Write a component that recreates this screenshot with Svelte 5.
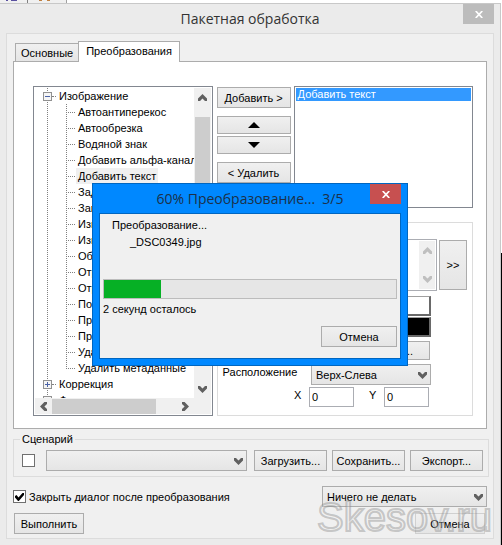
<script>
    let closeAfter = $state(true);
    let useScenario = $state(false);
    let selected = $state('Добавить текст');
    let posX = $state('0');
    let posY = $state('0');
    let progress = $state(19.5);

    const filters = [
        'Автоантиперекос',
        'Автообрезка',
        'Водяной знак',
        'Добавить альфа-канал',
        'Добавить текст',
        'Задать DPI',
        'Заменить',
        'Изменить',
        'Изменить',
        'Обрезка',
        'Отразить',
        'Отразить',
        'Поворот',
        'Преобразовать',
        'Профиль',
        'Удалить',
        'Удалить метаданные'
    ];
</script>

{#snippet chevron(dir)}
    <svg class="chevron {dir}" viewBox="0 0 9 7" width="9" height="7" aria-hidden="true">
        <path d="M0 0h2l2.5 2.6L7 0h2v2.6L4.5 7 0 2.6z" />
    </svg>
{/snippet}

{#snippet cross()}
    <svg viewBox="0 0 8 7" width="8" height="7" aria-hidden="true">
        <path d="M.7 0l6.600 7M7.300 0L.7 7" fill="none" stroke="#fff" stroke-width="1.700" />
    </svg>
{/snippet}

<div class="desktop">
    <div class="behind">
        <span class="blue"><i></i><i></i></span>
        <span class="orange"><i></i><i></i></span>
    </div>

    <main class="window">
        <header class="caption">
            <h1>Пакетная обработка</h1>
            <button class="close" type="button" aria-label="Закрыть">{@render cross()}</button>
        </header>

        <div class="client">
            <div class="tabs" role="tablist">
                <button type="button" role="tab" aria-selected="false">Основные</button>
                <button type="button" role="tab" aria-selected="true" class="active">Преобразования</button>
            </div>

            <section class="page">
                <div class="tree">
                    <div class="view">
                        <ul>
                            <li class="parent"><i class="box"></i><span>Изображение</span></li>
                            {#each filters as name, i}
                                <li class="child" class:last={i == filters.length - 1}>
                                    <span class:selected={name == selected}>{name}</span>
                                </li>
                            {/each}
                            <li class="parent"><i class="box plus"></i><span>Коррекция</span></li>
                            <li class="parent"><i class="box plus"></i><span>Фильтры</span></li>
                        </ul>
                    </div>
                    <div class="vbar">
                        {@render chevron('up')}
                        <i class="thumb"></i>
                        {@render chevron('down')}
                    </div>
                    <div class="hbar">
                        {@render chevron('left')}
                        <i class="thumb"></i>
                        {@render chevron('right')}
                    </div>
                </div>

                <div class="side">
                    <div class="chosen">
                        <div class="moves">
                            <button type="button">Добавить &gt;</button>
                            <button type="button" class="arrow" aria-label="Вверх">
                                <svg viewBox="0 0 12 6" width="12" height="6"><path d="M6 0l6 6H0z" /></svg>
                            </button>
                            <button type="button" class="arrow" aria-label="Вниз">
                                <svg viewBox="0 0 12 6" width="12" height="6"><path d="M0 0h12L6 6z" /></svg>
                            </button>
                            <button type="button">&lt; Удалить</button>
                        </div>
                        <ul class="list">
                            <li>Добавить текст</li>
                        </ul>
                    </div>

                    <div class="options">
                        <div class="text-row">
                            <div class="memo">
                                <textarea aria-label="Текст"></textarea>
                                <div class="memo-bar">
                                    {@render chevron('up')}
                                    {@render chevron('down')}
                                </div>
                            </div>
                            <button type="button">&gt;&gt;</button>
                        </div>
                        <div class="fields">
                            <button type="button" class="swatch" aria-label="Цвет фона"></button>
                            <button type="button" class="swatch black" aria-label="Цвет текста"></button>
                            <button type="button" class="font" aria-label="Шрифт">...</button>
                            <label for="place">Расположение</label>
                            <span class="select">
                                <select id="place"><option>Верх-Слева</option></select>
                                {@render chevron('down')}
                            </span>
                        </div>
                        <div class="coords">
                            <label for="x">X</label>
                            <input id="x" type="text" bind:value={posX} />
                            <label for="y">Y</label>
                            <input id="y" type="text" bind:value={posY} />
                        </div>
                    </div>
                </div>
            </section>

            <fieldset class="scenario">
                <legend>Сценарий</legend>
                <span class="check">
                    <input type="checkbox" aria-label="Использовать сценарий" bind:checked={useScenario} />
                </span>
                <span class="select">
                    <select aria-label="Сценарий"><option></option></select>
                    {@render chevron('down')}
                </span>
                <button type="button">Загрузить...</button>
                <button type="button">Сохранить...</button>
                <button type="button">Экспорт...</button>
            </fieldset>

            <div class="after">
                <label class="check">
                    <input type="checkbox" bind:checked={closeAfter} />
                    {#if closeAfter}
                        <svg viewBox="0 0 9 8" width="9" height="8" aria-hidden="true">
                            <path d="M0 3l1.500-1L3.500 4.500 7.500 0 9 0v2L3.800 8H3L0 4.500z" />
                        </svg>
                    {/if}
                    Закрыть диалог после преобразования
                </label>
                <span class="select">
                    <select aria-label="По завершении"><option>Ничего не делать</option></select>
                    {@render chevron('down')}
                </span>
            </div>

            <footer>
                <button type="button">Выполнить</button>
                <button type="button" class="cancel">Отмена</button>
            </footer>
        </div>
    </main>

    <div class="dialog" role="dialog" aria-labelledby="dialog-title">
        <header>
            <h2 id="dialog-title">60% Преобразование...&nbsp; 3/5</h2>
            <button class="close red" type="button" aria-label="Закрыть">{@render cross()}</button>
        </header>
        <div class="body">
            <p class="step">Преобразование...</p>
            <p class="file">_DSC0349.jpg</p>
            <div class="bar"><i style="width: {progress}%"></i></div>
            <p class="left-time">2 секунд осталось</p>
            <button type="button">Отмена</button>
        </div>
    </div>

    <div class="watermark">Skesov.ru</div>
</div>

<style>
    :global(body) {
        background: #ebebeb;
    }

    .desktop,
    .desktop :global(*) {
        box-sizing: border-box;
    }

    .desktop {
        position: relative;
        overflow: hidden;
        min-height: 100vh;
        display: flex;
        flex-direction: column;
        font: 11px/16px "Liberation Sans", Arial, sans-serif;
        color: #000;
        background: linear-gradient(#fff 253px, #000 253px);
    }

    h1, h2, p, ul {
        margin: 0;
        padding: 0;
        font-weight: 400;
        list-style: none;
    }

    .behind {
        height: 3px;
        display: flex;
    }

    .behind span {
        display: flex;
        gap: 3px;
        width: 28px;
        padding-left: 6px;
        border-right: 1px solid #808080;
        background: #f0f0f0;
    }

    .behind .orange {
        gap: 5px;
        width: 39px;
        padding-left: 11px;
        border-color: #a0a0a0;
    }

    .behind i {
        width: 3px;
        height: 1px;
        background: #c08040;
    }

    .behind .blue i {
        width: 2px;
        background: #5a50a0;
    }

    .behind .blue i + i {
        width: 6px;
    }

    .window {
        flex: 1;
        margin-right: 1px;
        padding: 0 6px 6px;
        background: #ebebeb;
        border: solid #c8c8c8;
        border-width: 1px 1px 0 0;
    }

    .caption {
        position: relative;
        height: 29px;
    }

    h1, h2 {
        font: 14px/30px "Open Sans", "Noto Sans", sans-serif;
        color: #333;
        text-align: center;
    }

    button {
        height: 21px;
        padding: 0;
        font: inherit;
        color: #000;
        white-space: nowrap;
        border: 1px solid #acacac;
        background: linear-gradient(#f0f0f0, #e5e5e5);
    }

    .close {
        position: absolute;
        top: 0;
        right: 0;
        width: 31px;
        height: 20px;
        display: flex;
        align-items: center;
        justify-content: center;
        border: none;
        background: #bcbcbc;
    }

    .close.red {
        background: #c75050;
    }

    .client {
        padding: 7px 4px 4px 6px;
        border: 1px solid #dcdcdc;
        background: #f0f0f0;
    }

    .tabs {
        display: flex;
        align-items: flex-end;
        padding-left: 2px;
    }

    .tabs button {
        height: 18px;
        padding: 0 5px;
        border-bottom: none;
    }

    .tabs .active {
        height: 21px;
        padding: 0 7px 2px;
        margin-bottom: -1px;
        margin-left: -1px;
        background: #fff;
        position: relative;
    }

    .page {
        display: grid;
        grid-template-columns: 180fr 257fr;
        gap: 4px;
        margin-right: 2px;
        padding: 24px 13px 12px 19px;
        border: 1px solid #acacac;
        background: #fff;
    }

    .tree {
        display: grid;
        grid-template-columns: 1fr 17px;
        grid-template-rows: 310px 16px;
        min-width: 0;
        padding: 1px;
        border: 1px solid #828790;
    }

    .view {
        overflow: hidden;
        white-space: nowrap;
    }

    .view li {
        height: 16px;
        display: flex;
        align-items: center;
        background: repeating-linear-gradient(#808080 0 1px, transparent 1px 2px) 12px 0 / 1px 100% no-repeat;
    }

    .parent {
        padding-left: 8px;
    }

    .parent::after {
        content: '';
        order: 1;
        width: 4px;
        border-top: 1px dotted #808080;
    }

    .parent span {
        order: 2;
        margin-left: 3px;
    }

    .box {
        width: 9px;
        height: 9px;
        border: 1px solid #919191;
        background:
            linear-gradient(#4b63a7, #4b63a7) center / 5px 1px no-repeat,
            #f5f5f5;
    }

    .box.plus {
        background:
            linear-gradient(#4b63a7, #4b63a7) center / 5px 1px no-repeat,
            linear-gradient(#4b63a7, #4b63a7) center / 1px 5px no-repeat,
            #f5f5f5;
    }

    .child {
        padding-left: 31px;
    }

    .child::before {
        content: '';
        flex: none;
        align-self: stretch;
        width: 10px;
        background:
            repeating-linear-gradient(#808080 0 1px, transparent 1px 2px) 0 0 / 1px 100% no-repeat,
            repeating-linear-gradient(90deg, #808080 0 1px, transparent 1px 2px) 0 8px / 9px 1px no-repeat;
    }

    .child.last::before {
        background:
            repeating-linear-gradient(#808080 0 1px, transparent 1px 2px) 0 0 / 1px 9px no-repeat,
            repeating-linear-gradient(90deg, #808080 0 1px, transparent 1px 2px) 0 8px / 9px 1px no-repeat;
    }

    .child span {
        padding: 0 2px;
    }

    .child .selected {
        background: #f0f0f0;
    }

    .chevron {
        flex: none;
        fill: #606060;
    }

    .chevron.up {
        transform: rotate(180deg);
    }

    .chevron.left {
        transform: rotate(90deg);
    }

    .chevron.right {
        transform: rotate(-90deg);
    }

    .vbar,
    .memo-bar {
        display: flex;
        flex-direction: column;
        align-items: center;
        justify-content: space-between;
        padding: 6px 0;
        background: #f0f0f0;
    }

    .vbar {
        padding-bottom: 5px;
    }

    .vbar .thumb {
        width: 15px;
        flex: 1;
        margin: 16px 0 60px;
        background: #cdcdcd;
    }

    .hbar {
        grid-column: 1 / 3;
        display: flex;
        align-items: center;
        padding: 0 21px 0 4px;
        background: #f0f0f0;
    }

    .hbar .thumb {
        flex: 1;
        height: 15px;
        margin: 0 25px 0 4px;
        background: #cdcdcd;
    }

    .side {
        min-width: 0;
        display: flex;
        flex-direction: column;
        gap: 14px;
    }

    .chosen {
        display: grid;
        grid-template-columns: 74px 1fr;
        gap: 3px;
        min-height: 122px;
    }

    .moves {
        display: flex;
        flex-direction: column;
        padding-top: 1px;
    }

    .moves .arrow {
        height: 18px;
        margin-top: 8px;
        line-height: 0;
    }

    .moves .arrow + .arrow {
        margin: 2px 0 8px;
    }

    .list {
        padding: 1px;
        border: 1px solid #828790;
    }

    .list li {
        height: 13px;
        padding-left: 2px;
        line-height: 13px;
        color: #fff;
        background: #3399ff;
    }

    .options {
        flex: 1;
        padding: 16px 5px 8px;
        border: 1px solid #dcdcdc;
    }

    .text-row {
        display: flex;
        gap: 2px;
        height: 52px;
    }

    .memo {
        flex: 1;
        display: flex;
        padding: 1px;
        border: 1px solid #abadb3;
    }

    textarea {
        flex: 1;
        min-width: 0;
        border: none;
        resize: none;
        font: inherit;
    }

    .memo-bar {
        width: 16px;
    }

    .memo-bar :global(.chevron) {
        fill: #bfbfbf;
    }

    .text-row button {
        width: 28px;
        height: 50px;
        margin-top: 1px;
    }

    .fields {
        display: grid;
        grid-template-columns: 1fr 120px;
        row-gap: 4px;
        margin: 5px 36px 0 0;
    }

    .swatch,
    .font {
        grid-column: 2;
    }

    .fields .swatch {
        height: 20px;
        margin-bottom: -3px;
        border: 1px solid #a0a0a0;
        border-right: 2px solid #696969;
        border-bottom: 2px solid #696969;
        background: #fff;
    }

    .fields .swatch.black {
        margin: 0;
        background: #000;
    }

    .fields .font {
        height: 19px;
        margin-right: 1px;
        padding-right: 16px;
        text-align: right;
    }

    .select {
        position: relative;
        display: flex;
    }

    .select :global(.chevron) {
        position: absolute;
        top: 8px;
        right: 4px;
        pointer-events: none;
    }

    select {
        appearance: none;
        width: 100%;
        height: 21px;
        padding: 0 16px 0 4px;
        font: inherit;
        color: #000;
        border: 1px solid #acacac;
        border-radius: 0;
        background: linear-gradient(#f0f0f0, #e5e5e5);
    }

    .coords {
        display: flex;
        justify-content: flex-end;
        margin: 2px 38px 0 0;
    }

    .coords label {
        width: 15px;
    }

    .coords input {
        width: 45px;
        height: 20px;
        padding: 0 2px;
        font: inherit;
        border: 1px solid #abadb3;
    }

    .coords input + label {
        margin-left: 15px;
    }

    .scenario {
        display: flex;
        align-items: center;
        gap: 5px;
        height: 46px;
        min-width: 0;
        margin: 2px 0 0;
        padding: 0 5px 2px 8px;
        border: 1px solid #dcdcdc;
    }

    .scenario legend {
        padding: 0 2px;
        margin-left: -2px;
    }

    .scenario .select {
        flex: 1;
        margin: 0 2px 0 6px;
    }

    .scenario button {
        width: 73px;
    }

    .check {
        position: relative;
        display: flex;
        align-items: center;
        gap: 3px;
    }

    .check input {
        appearance: none;
        width: 13px;
        height: 13px;
        margin: 0;
        border: 1px solid #707070;
        background: #fff;
    }

    .check svg {
        position: absolute;
        left: 2px;
    }

    .after {
        display: flex;
        justify-content: space-between;
        margin: 9px 2px 6px 0;
    }

    .after .select {
        width: 165px;
    }

    footer {
        display: flex;
        justify-content: space-between;
        padding: 0 4px 0 1px;
    }

    footer button {
        width: 70px;
    }

    footer .cancel {
        border-color: #d0d0d0;
    }

    .dialog {
        position: absolute;
        top: 183px;
        left: 92px;
        width: 316px;
        padding: 0 6px 6px;
        border: 1px solid #0066c0;
        background: #0088ff;
    }

    .dialog header {
        position: relative;
        height: 29px;
    }

    .dialog h2 {
        color: #1c3048;
    }

    .body {
        display: flex;
        flex-direction: column;
        padding: 3px 3px 11px;
        border: 1px solid #0066c0;
        background: #f0f0f0;
    }

    .step {
        padding-left: 9px;
    }

    .file {
        padding-left: 27px;
        margin: 1px 0 29px;
    }

    .bar {
        height: 20px;
        border: 1px solid #bcbcbc;
        background: #e6e6e6;
    }

    .bar i {
        display: block;
        height: 100%;
        background: #06b025;
    }

    .left-time {
        margin: 2px 0 9px;
    }

    .body button {
        width: 76px;
        align-self: flex-end;
    }

    .watermark {
        position: absolute;
        right: 10px;
        bottom: 8px;
        font-size: 40px;
        line-height: 40px;
        color: rgba(240, 240, 240, 0.3);
        -webkit-text-stroke: 2px rgba(130, 130, 130, 0.4);
        pointer-events: none;
    }
</style>
